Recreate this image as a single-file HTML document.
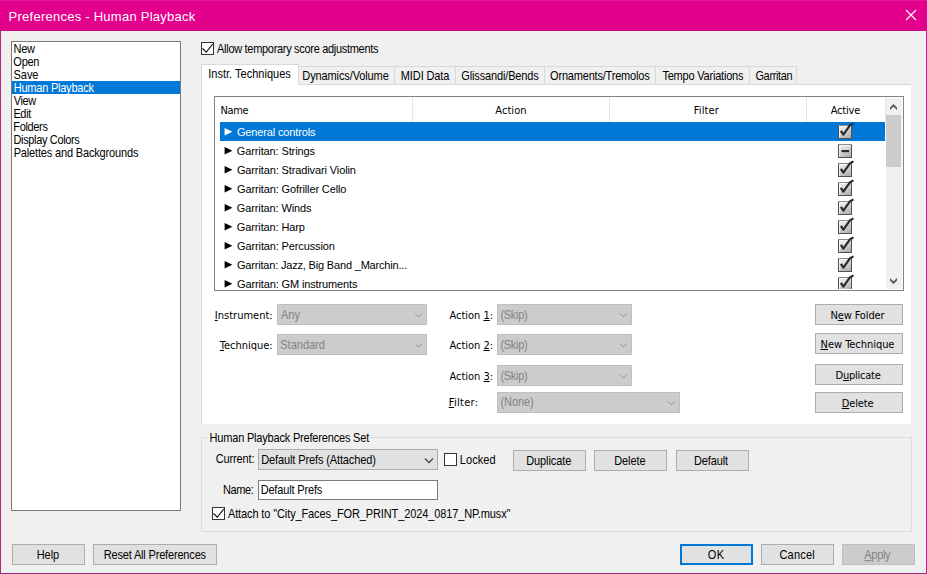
<!DOCTYPE html>
<html lang="en"><head><meta charset="utf-8"><title>Preferences - Human Playback</title>
<style>
html,body{margin:0;padding:0}
body{width:927px;height:574px;overflow:hidden;background:#f0f0f0;position:relative;font-family:"Liberation Sans",Arial,sans-serif;font-size:11px;color:#000}
.a{position:absolute;box-sizing:border-box}
.tx{position:absolute;white-space:pre;margin:0;padding:0}
.ms{transform:scaleY(1.125);transform-origin:0 10px}
.titlebar{left:0;top:0;width:927px;height:31px;background:#e3008c}
.wb{background:#e3008c}
.listbox{left:11px;top:41px;width:170px;height:470px;background:#fff;border:1px solid #7a7a7a}
.sel{background:#0078d7}
.cb{width:13px;height:13px;background:#fff;border:1px solid #333}
.tab{top:66px;height:18px;border:1px solid #d9d9d9;border-bottom:none;background:#f0f0f0}
.tab.on{top:64px;height:21px;background:#fff}
.pane{left:201px;top:84px;width:710px;height:340px;background:#fff;border:1px solid #d9d9d9;border-right:none;border-bottom:none}
.lv{left:214px;top:96px;width:690px;height:195px;background:#fff;border:1px solid #828282;overflow:hidden}
.hsep{top:97px;width:1px;height:25px;background:#e5e5e5}
.combo{background:#ccc;border:1px solid #bfbfbf;height:21px}
.btn{background:#e1e1e1;border:1px solid #adadad;height:21px}
.btn.dis{background:#ccc;border-color:#bfbfbf}
.btn.def{border:2px solid #0078d7}
.group{left:201px;top:437px;width:711px;height:95px;border:1px solid #dcdcdc}
.edit{background:#fff;border:1px solid #7a7a7a}
.combo2{background:#e1e1e1;border:1px solid #adadad;height:21px}
</style></head>
<body>
<svg width="0" height="0" style="position:absolute"><defs><linearGradient id="cbg" x1="0" y1="0" x2="0.55" y2="1"><stop offset="0" stop-color="#f6f6f6"/><stop offset="0.45" stop-color="#dedede"/><stop offset="1" stop-color="#b2b2b2"/></linearGradient></defs></svg>
<div class="a titlebar" style=""></div>
<svg class="a" style="left:905px;top:9px" width="12" height="12" viewBox="0 0 12 12"><path d="M1 1 L11 11 M11 1 L1 11" stroke="#fff" stroke-width="1.1" fill="none"/></svg>
<div class="a " style="left:0;top:0;width:927px;height:1px;background:#e8189a"></div>
<div class="a " style="left:0;top:30px;width:927px;height:1px;background:#c40c80"></div>
<div class="a " style="left:0;top:31px;width:1px;height:543px;background:#b3257f"></div>
<div class="a " style="left:926px;top:31px;width:1px;height:543px;background:#df1498"></div>
<div class="a " style="left:0;top:573px;width:927px;height:1px;background:#a02a78"></div>
<div class="a listbox" style=""></div>
<div class="a sel" style="left:12px;top:81px;width:168px;height:13px"></div>
<svg class="a" style="left:201px;top:42px" width="13" height="13" viewBox="0 0 13 13"><rect x="0.5" y="0.5" width="12" height="12" fill="#fff" stroke="#333"/><path d="M1.5 6.5 L5.3 10.2 L11.8 2" fill="none" stroke="#111" stroke-width="1.15"/></svg>
<div class="a pane" style=""></div>
<div class="a tab on" style="left:201px;width:98px"></div>
<div class="a tab" style="left:299px;width:96px;border-left:none"></div>
<div class="a tab" style="left:394px;width:62px"></div>
<div class="a tab" style="left:455px;width:90px"></div>
<div class="a tab" style="left:544px;width:112px"></div>
<div class="a tab" style="left:655px;width:95px"></div>
<div class="a tab" style="left:749px;width:48px"></div>
<div class="a lv" style=""></div>
<div class="a hsep" style="left:412px"></div>
<div class="a hsep" style="left:609px"></div>
<div class="a hsep" style="left:806px"></div>
<div class="a hsep" style="left:885px"></div>
<div class="a sel" style="left:220px;top:122px;width:665px;height:19px"></div>
<svg class="a" style="left:224px;top:127px" width="10" height="10" viewBox="0 0 10 10"><path d="M0.6 1.1 L8.4 4.8 L0.6 8.5 Z" fill="#fff"/></svg>
<svg class="a" style="left:224px;top:146px" width="10" height="10" viewBox="0 0 10 10"><path d="M0.6 1.1 L8.4 4.8 L0.6 8.5 Z" fill="#000"/></svg>
<svg class="a" style="left:224px;top:165px" width="10" height="10" viewBox="0 0 10 10"><path d="M0.6 1.1 L8.4 4.8 L0.6 8.5 Z" fill="#000"/></svg>
<svg class="a" style="left:224px;top:184px" width="10" height="10" viewBox="0 0 10 10"><path d="M0.6 1.1 L8.4 4.8 L0.6 8.5 Z" fill="#000"/></svg>
<svg class="a" style="left:224px;top:203px" width="10" height="10" viewBox="0 0 10 10"><path d="M0.6 1.1 L8.4 4.8 L0.6 8.5 Z" fill="#000"/></svg>
<svg class="a" style="left:224px;top:222px" width="10" height="10" viewBox="0 0 10 10"><path d="M0.6 1.1 L8.4 4.8 L0.6 8.5 Z" fill="#000"/></svg>
<svg class="a" style="left:224px;top:241px" width="10" height="10" viewBox="0 0 10 10"><path d="M0.6 1.1 L8.4 4.8 L0.6 8.5 Z" fill="#000"/></svg>
<svg class="a" style="left:224px;top:260px" width="10" height="10" viewBox="0 0 10 10"><path d="M0.6 1.1 L8.4 4.8 L0.6 8.5 Z" fill="#000"/></svg>
<svg class="a" style="left:224px;top:279px" width="10" height="10" viewBox="0 0 10 10"><path d="M0.6 1.1 L8.4 4.8 L0.6 8.5 Z" fill="#000"/></svg>
<svg class="a" style="left:837px;top:121px" width="19" height="19" viewBox="-1 -4 19 19"><rect x="0.5" y="0.5" width="13" height="13" fill="url(#cbg)" stroke="#505050" stroke-width="1"/><path d="M0 0.5 H14" stroke="#8a8a8a" stroke-width="1"/><path d="M1.5 13 V1.5 H13" stroke="#fff" stroke-opacity="0.55" stroke-width="1" fill="none"/><path d="M2.9 5.9 L5.4 9.7 L12.1 0.2 L15.5 -1.6" fill="none" stroke="#2a2a2a" stroke-width="2.2" stroke-linejoin="round"/></svg>
<svg class="a" style="left:837px;top:140px" width="19" height="19" viewBox="-1 -4 19 19"><rect x="0.5" y="0.5" width="13" height="13" fill="url(#cbg)" stroke="#505050" stroke-width="1"/><path d="M0 0.5 H14" stroke="#8a8a8a" stroke-width="1"/><path d="M1.5 13 V1.5 H13" stroke="#fff" stroke-opacity="0.55" stroke-width="1" fill="none"/><rect x="3.5" y="6" width="7.5" height="2.2" fill="#2b2b2b"/></svg>
<svg class="a" style="left:837px;top:159px" width="19" height="19" viewBox="-1 -4 19 19"><rect x="0.5" y="0.5" width="13" height="13" fill="url(#cbg)" stroke="#505050" stroke-width="1"/><path d="M0 0.5 H14" stroke="#8a8a8a" stroke-width="1"/><path d="M1.5 13 V1.5 H13" stroke="#fff" stroke-opacity="0.55" stroke-width="1" fill="none"/><path d="M2.9 5.9 L5.4 9.7 L12.1 0.2 L15.5 -1.6" fill="none" stroke="#2a2a2a" stroke-width="2.2" stroke-linejoin="round"/></svg>
<svg class="a" style="left:837px;top:178px" width="19" height="19" viewBox="-1 -4 19 19"><rect x="0.5" y="0.5" width="13" height="13" fill="url(#cbg)" stroke="#505050" stroke-width="1"/><path d="M0 0.5 H14" stroke="#8a8a8a" stroke-width="1"/><path d="M1.5 13 V1.5 H13" stroke="#fff" stroke-opacity="0.55" stroke-width="1" fill="none"/><path d="M2.9 5.9 L5.4 9.7 L12.1 0.2 L15.5 -1.6" fill="none" stroke="#2a2a2a" stroke-width="2.2" stroke-linejoin="round"/></svg>
<svg class="a" style="left:837px;top:197px" width="19" height="19" viewBox="-1 -4 19 19"><rect x="0.5" y="0.5" width="13" height="13" fill="url(#cbg)" stroke="#505050" stroke-width="1"/><path d="M0 0.5 H14" stroke="#8a8a8a" stroke-width="1"/><path d="M1.5 13 V1.5 H13" stroke="#fff" stroke-opacity="0.55" stroke-width="1" fill="none"/><path d="M2.9 5.9 L5.4 9.7 L12.1 0.2 L15.5 -1.6" fill="none" stroke="#2a2a2a" stroke-width="2.2" stroke-linejoin="round"/></svg>
<svg class="a" style="left:837px;top:216px" width="19" height="19" viewBox="-1 -4 19 19"><rect x="0.5" y="0.5" width="13" height="13" fill="url(#cbg)" stroke="#505050" stroke-width="1"/><path d="M0 0.5 H14" stroke="#8a8a8a" stroke-width="1"/><path d="M1.5 13 V1.5 H13" stroke="#fff" stroke-opacity="0.55" stroke-width="1" fill="none"/><path d="M2.9 5.9 L5.4 9.7 L12.1 0.2 L15.5 -1.6" fill="none" stroke="#2a2a2a" stroke-width="2.2" stroke-linejoin="round"/></svg>
<svg class="a" style="left:837px;top:235px" width="19" height="19" viewBox="-1 -4 19 19"><rect x="0.5" y="0.5" width="13" height="13" fill="url(#cbg)" stroke="#505050" stroke-width="1"/><path d="M0 0.5 H14" stroke="#8a8a8a" stroke-width="1"/><path d="M1.5 13 V1.5 H13" stroke="#fff" stroke-opacity="0.55" stroke-width="1" fill="none"/><path d="M2.9 5.9 L5.4 9.7 L12.1 0.2 L15.5 -1.6" fill="none" stroke="#2a2a2a" stroke-width="2.2" stroke-linejoin="round"/></svg>
<svg class="a" style="left:837px;top:254px" width="19" height="19" viewBox="-1 -4 19 19"><rect x="0.5" y="0.5" width="13" height="13" fill="url(#cbg)" stroke="#505050" stroke-width="1"/><path d="M0 0.5 H14" stroke="#8a8a8a" stroke-width="1"/><path d="M1.5 13 V1.5 H13" stroke="#fff" stroke-opacity="0.55" stroke-width="1" fill="none"/><path d="M2.9 5.9 L5.4 9.7 L12.1 0.2 L15.5 -1.6" fill="none" stroke="#2a2a2a" stroke-width="2.2" stroke-linejoin="round"/></svg>
<svg class="a" style="left:837px;top:273px" width="19" height="19" viewBox="-1 -4 19 19"><rect x="0.5" y="0.5" width="13" height="13" fill="url(#cbg)" stroke="#505050" stroke-width="1"/><path d="M0 0.5 H14" stroke="#8a8a8a" stroke-width="1"/><path d="M1.5 13 V1.5 H13" stroke="#fff" stroke-opacity="0.55" stroke-width="1" fill="none"/><path d="M2.9 5.9 L5.4 9.7 L12.1 0.2 L15.5 -1.6" fill="none" stroke="#2a2a2a" stroke-width="2.2" stroke-linejoin="round"/></svg>
<div class="a " style="left:215px;top:289px;width:688px;height:1px;background:#fff"></div>
<div class="a " style="left:214px;top:290px;width:690px;height:1px;background:#828282"></div>
<div class="a " style="left:201px;top:291px;width:710px;height:12px;background:#fff;border-left:1px solid #d9d9d9"></div>
<div class="a " style="left:886px;top:98px;width:16px;height:191px;background:#f0f0f0"></div>
<div class="a " style="left:886px;top:115px;width:15px;height:52px;background:#cdcdcd"></div>
<svg class="a" style="left:888px;top:103px" width="12" height="9" viewBox="0 0 12 9"><path d="M2 4.7 L5.5 1 L9 4.7 V7.1 L5.5 3.5 L2 7.1 Z" fill="#4d4d4d"/></svg>
<svg class="a" style="left:888px;top:277px" width="12" height="9" viewBox="0 0 12 9"><path d="M2 1 L5.5 4.6 L9 1 V3.4 L5.5 7.1 L2 3.4 Z" fill="#4d4d4d"/></svg>
<div class="a combo" style="left:277px;top:304px;width:150px"></div>
<svg class="a" style="left:413.5px;top:312px" width="9" height="6.5" viewBox="0 0 9 6.5"><path d="M1 1.5 L4.5 5.0 L8 1.5" fill="none" stroke="#949494" stroke-width="1"/></svg>
<div class="a combo" style="left:277px;top:334px;width:150px"></div>
<svg class="a" style="left:413.5px;top:342px" width="9" height="6.5" viewBox="0 0 9 6.5"><path d="M1 1.5 L4.5 5.0 L8 1.5" fill="none" stroke="#949494" stroke-width="1"/></svg>
<div class="a combo" style="left:497px;top:304px;width:135px"></div>
<svg class="a" style="left:618.5px;top:312px" width="9" height="6.5" viewBox="0 0 9 6.5"><path d="M1 1.5 L4.5 5.0 L8 1.5" fill="none" stroke="#949494" stroke-width="1"/></svg>
<div class="a combo" style="left:497px;top:334px;width:135px"></div>
<svg class="a" style="left:618.5px;top:342px" width="9" height="6.5" viewBox="0 0 9 6.5"><path d="M1 1.5 L4.5 5.0 L8 1.5" fill="none" stroke="#949494" stroke-width="1"/></svg>
<div class="a combo" style="left:497px;top:365px;width:135px"></div>
<svg class="a" style="left:618.5px;top:373px" width="9" height="6.5" viewBox="0 0 9 6.5"><path d="M1 1.5 L4.5 5.0 L8 1.5" fill="none" stroke="#949494" stroke-width="1"/></svg>
<div class="a combo" style="left:497px;top:392px;width:183px"></div>
<svg class="a" style="left:666.5px;top:400px" width="9" height="6.5" viewBox="0 0 9 6.5"><path d="M1 1.5 L4.5 5.0 L8 1.5" fill="none" stroke="#949494" stroke-width="1"/></svg>
<div class="a btn" style="left:815px;top:304px;width:88px"></div>
<div class="a btn" style="left:815px;top:333px;width:88px"></div>
<div class="a btn" style="left:815px;top:364px;width:88px"></div>
<div class="a btn" style="left:815px;top:392px;width:88px"></div>
<div class="a group" style=""></div>
<div class="a " style="left:208px;top:430px;width:163px;height:14px;background:#f0f0f0"></div>
<div class="a combo2" style="left:258px;top:449px;width:180px"></div>
<svg class="a" style="left:424.0px;top:456.5px" width="10" height="7.2" viewBox="0 0 10 7.2"><path d="M1 1.5 L5.0 5.7 L9 1.5" fill="none" stroke="#3a3a3a" stroke-width="1.15"/></svg>
<svg class="a" style="left:444px;top:453px" width="13" height="13" viewBox="0 0 13 13"><rect x="0.5" y="0.5" width="12" height="12" fill="#fff" stroke="#333"/></svg>
<div class="a btn" style="left:513px;top:450px;width:73px"></div>
<div class="a btn" style="left:594px;top:450px;width:73px"></div>
<div class="a btn" style="left:676px;top:450px;width:73px"></div>
<div class="a edit" style="left:258px;top:480px;width:180px;height:20px"></div>
<svg class="a" style="left:212px;top:507px" width="13" height="13" viewBox="0 0 13 13"><rect x="0.5" y="0.5" width="12" height="12" fill="#fff" stroke="#333"/><path d="M1.5 6.5 L5.3 10.2 L11.8 2" fill="none" stroke="#111" stroke-width="1.15"/></svg>
<div class="a btn" style="left:12px;top:544px;width:73px"></div>
<div class="a btn" style="left:93px;top:544px;width:124px"></div>
<div class="a btn def" style="left:680px;top:544px;width:73px"></div>
<div class="a btn" style="left:761px;top:544px;width:73px"></div>
<div class="a btn dis" style="left:842px;top:544px;width:73px"></div>
<span class="tx" style="left:8.62px;top:9px;font:13px/15px 'Liberation Sans', Arial, sans-serif;color:#fff;letter-spacing:0.247px">Preferences - Human Playback</span>
<span class="tx ms" style="left:13.58px;top:43px;font:11px/13px 'Liberation Sans', Arial, sans-serif;color:#000;letter-spacing:-0.350px">New</span>
<span class="tx ms" style="left:13.33px;top:56px;font:11px/13px 'Liberation Sans', Arial, sans-serif;color:#000;letter-spacing:-0.259px">Open</span>
<span class="tx ms" style="left:13.57px;top:69px;font:11px/13px 'Liberation Sans', Arial, sans-serif;color:#000;letter-spacing:-0.061px">Save</span>
<span class="tx ms" style="left:13.70px;top:82px;font:11px/13px 'Liberation Sans', Arial, sans-serif;color:#fff;letter-spacing:-0.221px">Human Playback</span>
<span class="tx ms" style="left:13.67px;top:95px;font:11px/13px 'Liberation Sans', Arial, sans-serif;color:#000;letter-spacing:-0.350px">View</span>
<span class="tx ms" style="left:13.39px;top:108px;font:11px/13px 'Liberation Sans', Arial, sans-serif;color:#000;letter-spacing:-0.350px">Edit</span>
<span class="tx ms" style="left:13.33px;top:121px;font:11px/13px 'Liberation Sans', Arial, sans-serif;color:#000;letter-spacing:-0.350px">Folders</span>
<span class="tx ms" style="left:13.48px;top:134px;font:11px/13px 'Liberation Sans', Arial, sans-serif;color:#000;letter-spacing:-0.350px">Display Colors</span>
<span class="tx ms" style="left:13.69px;top:147px;font:11px/13px 'Liberation Sans', Arial, sans-serif;color:#000;letter-spacing:-0.162px">Palettes and Backgrounds</span>
<span class="tx ms" style="left:217.08px;top:43px;font:11px/13px 'Liberation Sans', Arial, sans-serif;color:#000;letter-spacing:-0.305px">Allow temporary score adjustments</span>
<span class="tx ms" style="left:208.27px;top:68px;font:11px/13px 'Liberation Sans', Arial, sans-serif;color:#000;letter-spacing:0.013px">Instr. Techniques</span>
<span class="tx ms" style="left:302.32px;top:70px;font:11px/13px 'Liberation Sans', Arial, sans-serif;color:#000;letter-spacing:-0.114px">Dynamics/Volume</span>
<span class="tx ms" style="left:400.80px;top:70px;font:11px/13px 'Liberation Sans', Arial, sans-serif;color:#000;letter-spacing:-0.109px">MIDI Data</span>
<span class="tx ms" style="left:461.29px;top:70px;font:11px/13px 'Liberation Sans', Arial, sans-serif;color:#000;letter-spacing:-0.143px">Glissandi/Bends</span>
<span class="tx ms" style="left:550.11px;top:70px;font:11px/13px 'Liberation Sans', Arial, sans-serif;color:#000;letter-spacing:-0.196px">Ornaments/Tremolos</span>
<span class="tx ms" style="left:662.41px;top:70px;font:11px/13px 'Liberation Sans', Arial, sans-serif;color:#000;letter-spacing:-0.207px">Tempo Variations</span>
<span class="tx ms" style="left:755.42px;top:70px;font:11px/13px 'Liberation Sans', Arial, sans-serif;color:#000;letter-spacing:-0.347px">Garritan</span>
<span class="tx" style="left:220.49px;top:104px;font:11px/13px 'DejaVu Sans Condensed', 'Liberation Sans', sans-serif;color:#000;letter-spacing:-0.350px">Name</span>
<span class="tx" style="left:495.28px;top:104px;font:11px/13px 'DejaVu Sans Condensed', 'Liberation Sans', sans-serif;color:#000;letter-spacing:0.068px">Action</span>
<span class="tx" style="left:693.85px;top:104px;font:11px/13px 'DejaVu Sans Condensed', 'Liberation Sans', sans-serif;color:#000;letter-spacing:0.112px">Filter</span>
<span class="tx" style="left:830.63px;top:104px;font:11px/13px 'DejaVu Sans Condensed', 'Liberation Sans', sans-serif;color:#000;letter-spacing:-0.172px">Active</span>
<span class="tx" style="left:236.89px;top:126px;font:11px/13px 'Liberation Sans', Arial, sans-serif;color:#fff;letter-spacing:-0.133px">General controls</span>
<span class="tx" style="left:236.85px;top:145px;font:11px/13px 'Liberation Sans', Arial, sans-serif;color:#000;letter-spacing:-0.122px">Garritan: Strings</span>
<span class="tx" style="left:236.88px;top:164px;font:11px/13px 'Liberation Sans', Arial, sans-serif;color:#000;letter-spacing:-0.117px">Garritan: Stradivari Violin</span>
<span class="tx" style="left:237.00px;top:183px;font:11px/13px 'Liberation Sans', Arial, sans-serif;color:#000;letter-spacing:-0.127px">Garritan: Gofriller Cello</span>
<span class="tx" style="left:236.86px;top:202px;font:11px/13px 'Liberation Sans', Arial, sans-serif;color:#000;letter-spacing:-0.127px">Garritan: Winds</span>
<span class="tx" style="left:236.85px;top:221px;font:11px/13px 'Liberation Sans', Arial, sans-serif;color:#000;letter-spacing:-0.124px">Garritan: Harp</span>
<span class="tx" style="left:237.12px;top:240px;font:11px/13px 'Liberation Sans', Arial, sans-serif;color:#000;letter-spacing:-0.135px">Garritan: Percussion</span>
<span class="tx" style="left:236.95px;top:259px;font:11px/13px 'Liberation Sans', Arial, sans-serif;color:#000;letter-spacing:-0.181px">Garritan: Jazz, Big Band _Marchin...</span>
<span class="tx" style="left:237.11px;top:278px;font:11px/13px 'Liberation Sans', Arial, sans-serif;color:#000;letter-spacing:-0.136px">Garritan: GM instruments</span>
<span class="tx" style="left:214.77px;top:309px;font:11px/13px 'DejaVu Sans Condensed', 'Liberation Sans', sans-serif;color:#000;letter-spacing:0.015px"><u>I</u>nstrument:</span>
<span class="tx" style="left:219.85px;top:339px;font:11px/13px 'DejaVu Sans Condensed', 'Liberation Sans', sans-serif;color:#000;letter-spacing:-0.023px"><u>T</u>echnique:</span>
<span class="tx" style="left:449.47px;top:309px;font:11px/13px 'DejaVu Sans Condensed', 'Liberation Sans', sans-serif;color:#000;letter-spacing:-0.016px">Action <u>1</u>:</span>
<span class="tx" style="left:449.47px;top:339px;font:11px/13px 'DejaVu Sans Condensed', 'Liberation Sans', sans-serif;color:#000;letter-spacing:-0.016px">Action <u>2</u>:</span>
<span class="tx" style="left:449.47px;top:370px;font:11px/13px 'DejaVu Sans Condensed', 'Liberation Sans', sans-serif;color:#000;letter-spacing:-0.016px">Action <u>3</u>:</span>
<span class="tx" style="left:448.73px;top:396px;font:11px/13px 'DejaVu Sans Condensed', 'Liberation Sans', sans-serif;color:#000;letter-spacing:0.297px"><u>F</u>ilter:</span>
<span class="tx ms" style="left:280.97px;top:309px;font:11px/13px 'Liberation Sans', Arial, sans-serif;color:#838383">Any</span>
<span class="tx ms" style="left:280.26px;top:339px;font:11px/13px 'Liberation Sans', Arial, sans-serif;color:#838383">Standard</span>
<span class="tx ms" style="left:500.39px;top:309px;font:11px/13px 'Liberation Sans', Arial, sans-serif;color:#838383;letter-spacing:-0.271px">(Skip)</span>
<span class="tx ms" style="left:500.39px;top:339px;font:11px/13px 'Liberation Sans', Arial, sans-serif;color:#838383;letter-spacing:-0.271px">(Skip)</span>
<span class="tx ms" style="left:500.39px;top:370px;font:11px/13px 'Liberation Sans', Arial, sans-serif;color:#838383;letter-spacing:-0.271px">(Skip)</span>
<span class="tx ms" style="left:500.49px;top:396px;font:11px/13px 'Liberation Sans', Arial, sans-serif;color:#838383;letter-spacing:-0.071px">(None)</span>
<span class="tx" style="left:830.42px;top:309px;font:11px/13px 'DejaVu Sans Condensed', 'Liberation Sans', sans-serif;color:#000;letter-spacing:-0.119px">N<u>e</u>w Folder</span>
<span class="tx" style="left:820.60px;top:338px;font:11px/13px 'DejaVu Sans Condensed', 'Liberation Sans', sans-serif;color:#000;letter-spacing:-0.044px"><u>N</u>ew Technique</span>
<span class="tx" style="left:835.50px;top:369px;font:11px/13px 'DejaVu Sans Condensed', 'Liberation Sans', sans-serif;color:#000;letter-spacing:-0.241px">D<u>u</u>plicate</span>
<span class="tx" style="left:841.79px;top:397px;font:11px/13px 'DejaVu Sans Condensed', 'Liberation Sans', sans-serif;color:#000;letter-spacing:-0.138px"><u>D</u>elete</span>
<span class="tx ms" style="left:209.57px;top:432px;font:11px/13px 'Liberation Sans', Arial, sans-serif;color:#000;letter-spacing:-0.188px">Human Playback Preferences Set</span>
<span class="tx ms" style="left:215.71px;top:453px;font:11px/13px 'Liberation Sans', Arial, sans-serif;color:#000;letter-spacing:-0.117px">Current:</span>
<span class="tx ms" style="left:261.22px;top:454px;font:11px/13px 'Liberation Sans', Arial, sans-serif;color:#000;letter-spacing:-0.117px">Default Prefs (Attached)</span>
<span class="tx ms" style="left:459.81px;top:454px;font:11px/13px 'Liberation Sans', Arial, sans-serif;color:#000;letter-spacing:0.064px">Locked</span>
<span class="tx ms" style="left:526.17px;top:455px;font:11px/13px 'Liberation Sans', Arial, sans-serif;color:#000;letter-spacing:-0.073px">Duplicate</span>
<span class="tx ms" style="left:614.17px;top:455px;font:11px/13px 'Liberation Sans', Arial, sans-serif;color:#000;letter-spacing:-0.079px">Delete</span>
<span class="tx ms" style="left:693.97px;top:455px;font:11px/13px 'Liberation Sans', Arial, sans-serif;color:#000;letter-spacing:-0.110px">Default</span>
<span class="tx ms" style="left:222.89px;top:484px;font:11px/13px 'Liberation Sans', Arial, sans-serif;color:#000;letter-spacing:-0.350px">Name:</span>
<span class="tx ms" style="left:260.64px;top:484px;font:11px/13px 'Liberation Sans', Arial, sans-serif;color:#000;letter-spacing:-0.161px">Default Prefs</span>
<span class="tx ms" style="left:227.94px;top:508px;font:11px/13px 'Liberation Sans', Arial, sans-serif;color:#000;letter-spacing:-0.116px">Attach to "City_Faces_FOR_PRINT_2024_0817_NP.musx"</span>
<span class="tx ms" style="left:36.72px;top:549px;font:11px/13px 'Liberation Sans', Arial, sans-serif;color:#000;letter-spacing:-0.067px">Help</span>
<span class="tx ms" style="left:103.73px;top:549px;font:11px/13px 'Liberation Sans', Arial, sans-serif;color:#000;letter-spacing:-0.171px">Reset All Preferences</span>
<span class="tx ms" style="left:707.84px;top:549px;font:11px/13px 'Liberation Sans', Arial, sans-serif;color:#000;letter-spacing:0.350px">OK</span>
<span class="tx ms" style="left:779.42px;top:549px;font:11px/13px 'Liberation Sans', Arial, sans-serif;color:#000;letter-spacing:0.212px">Cancel</span>
<span class="tx ms" style="left:864.33px;top:549px;font:11px/13px 'Liberation Sans', Arial, sans-serif;color:#838383;letter-spacing:-0.311px"><u>A</u>pply</span>
</body></html>
